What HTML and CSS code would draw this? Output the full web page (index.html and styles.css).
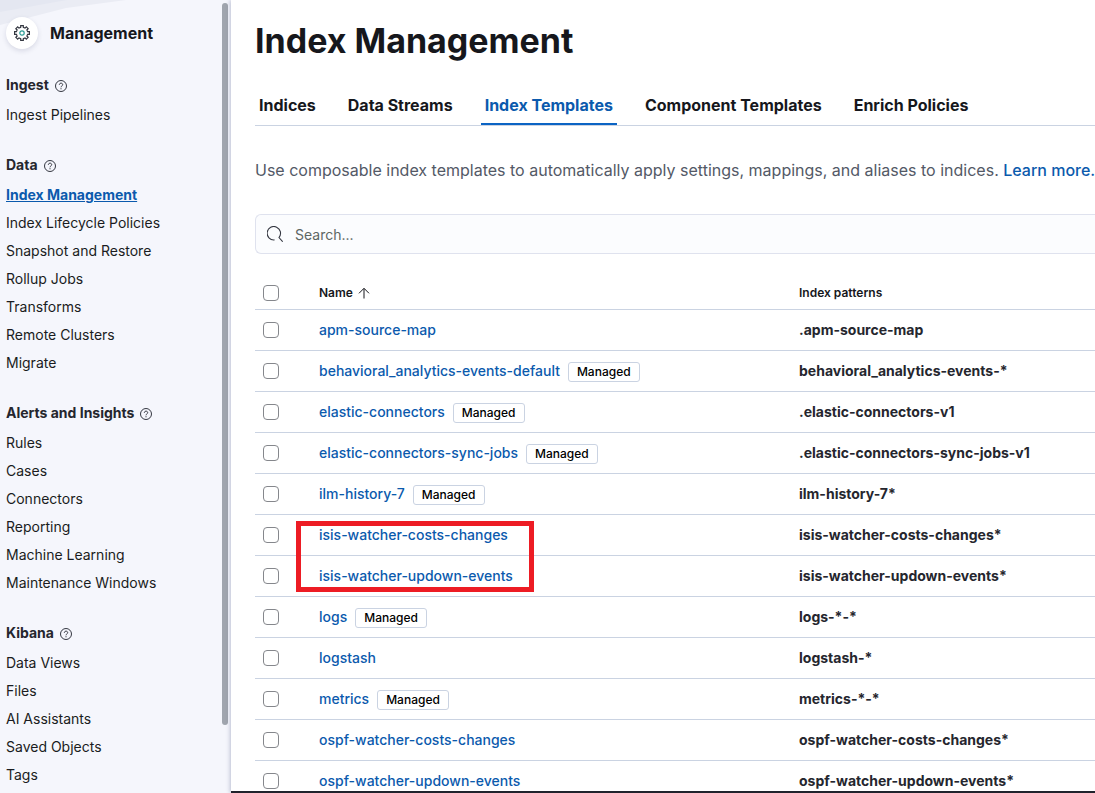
FILE: index.html
```html
<!DOCTYPE html>
<html lang="en">
<head>
<meta charset="utf-8">
<title>Index Management</title>
<link rel="stylesheet" href="styles.css">
</head>
<body>
<svg class="defs" aria-hidden="true">
  <symbol id="help" viewBox="0 0 12 12"><circle cx="6" cy="6" r="5.500" fill="none" stroke="currentColor" stroke-width="1"/><path d="M4.300 4.800c0-2.200 3.400-2.200 3.400-.1C7.700 5.900 6 5.900 6 7.300M6 8.200v1.100" fill="none" stroke="currentColor" stroke-width="1"/></symbol>
</svg>
<div class="app">
  <aside class="sidebar">
    <svg class="sidebar-art" viewBox="0 0 222 26" aria-hidden="true"><path d="M0 0H126L66 8 0 25z" fill="#eaecf4"/><path d="M0 0H67L0 12z" fill="#e4e7f1"/></svg>
    <header class="brand">
      <span class="avatar"><svg width="18" height="18" viewBox="0 0 18 18" fill="none" aria-hidden="true"><path d="M7.700 3.400V1.600h2.600v1.800l1.740.72 1.270-1.270 1.840 1.840-1.270 1.270.72 1.740h1.800v2.600h-1.800l-.72 1.740 1.270 1.270-1.840 1.840-1.270-1.270-1.740.72v1.800H7.700v-1.800l-1.740-.72-1.270 1.270-1.840-1.840 1.270-1.270-.72-1.740H1.600V7.700h1.800l.72-1.740-1.270-1.270 1.840-1.840 1.270 1.270z" stroke="#343741" stroke-width="1.200"/><circle cx="9" cy="9" r="2.200" stroke="#2d9c96" stroke-width="1.200"/></svg></span>
      <h2 class="brand-name">Management</h2>
    </header>
    <nav class="nav" aria-label="Management">
      <section class="group">
        <h3 class="group-title">Ingest <svg class="help"><use href="#help"/></svg></h3>
        <ul class="links"><li><a href="#">Ingest Pipelines</a></li></ul>
      </section>
      <section class="group">
        <h3 class="group-title">Data <svg class="help"><use href="#help"/></svg></h3>
        <ul class="links">
          <li><a href="#" class="current" aria-current="page">Index Management</a></li>
          <li><a href="#">Index Lifecycle Policies</a></li>
          <li><a href="#">Snapshot and Restore</a></li>
          <li><a href="#">Rollup Jobs</a></li>
          <li><a href="#">Transforms</a></li>
          <li><a href="#">Remote Clusters</a></li>
          <li><a href="#">Migrate</a></li>
        </ul>
      </section>
      <section class="group">
        <h3 class="group-title">Alerts and Insights <svg class="help"><use href="#help"/></svg></h3>
        <ul class="links">
          <li><a href="#">Rules</a></li>
          <li><a href="#">Cases</a></li>
          <li><a href="#">Connectors</a></li>
          <li><a href="#">Reporting</a></li>
          <li><a href="#">Machine Learning</a></li>
          <li><a href="#">Maintenance Windows</a></li>
        </ul>
      </section>
      <section class="group">
        <h3 class="group-title">Kibana <svg class="help"><use href="#help"/></svg></h3>
        <ul class="links">
          <li><a href="#">Data Views</a></li>
          <li><a href="#">Files</a></li>
          <li><a href="#">AI Assistants</a></li>
          <li><a href="#">Saved Objects</a></li>
          <li><a href="#">Tags</a></li>
        </ul>
      </section>
    </nav>
    <div class="scroll-thumb"></div>
  </aside>
  <main class="main">
    <h1 class="title">Index Management</h1>
    <nav class="tabs" aria-label="Sections">
      <a class="tab" href="#">Indices</a>
      <a class="tab" href="#">Data Streams</a>
      <a class="tab selected" href="#" aria-current="page">Index Templates</a>
      <a class="tab" href="#">Component Templates</a>
      <a class="tab" href="#">Enrich Policies</a>
    </nav>
    <p class="intro">Use composable index templates to automatically apply settings, mappings, and aliases to indices. <a href="#">Learn more.</a></p>
    <label class="search">
      <svg width="16" height="16" viewBox="0 0 16 16" fill="none" stroke="#343741" stroke-width="1.100" aria-hidden="true"><path d="M7.500 13.900A6.700 6.700 0 1 1 12 11.500l3.700 4.200"/></svg>
      <input type="search" placeholder="Search..." aria-label="Search">
    </label>
    <table class="table">
      <colgroup><col class="col-check"><col class="col-name"><col></colgroup>
      <thead>
        <tr><th><input type="checkbox" aria-label="Select all rows"></th><th><button class="sort" type="button">Name <svg width="12" height="12" viewBox="0 0 12 12" fill="none" stroke="currentColor" aria-hidden="true"><path d="M6 11.500V1.500M1 6.300l5-5 5 5"/></svg></button></th><th>Index patterns</th></tr>
      </thead>
      <tbody>
        <tr><td><input type="checkbox" aria-label="Select apm-source-map"></td><td><a href="#">apm-source-map</a></td><td>.apm-source-map</td></tr>
        <tr><td><input type="checkbox" aria-label="Select behavioral_analytics-events-default"></td><td><a href="#">behavioral_analytics-events-default</a><span class="badge">Managed</span></td><td>behavioral_analytics-events-*</td></tr>
        <tr><td><input type="checkbox" aria-label="Select elastic-connectors"></td><td><a href="#">elastic-connectors</a><span class="badge">Managed</span></td><td>.elastic-connectors-v1</td></tr>
        <tr><td><input type="checkbox" aria-label="Select elastic-connectors-sync-jobs"></td><td><a href="#">elastic-connectors-sync-jobs</a><span class="badge">Managed</span></td><td>.elastic-connectors-sync-jobs-v1</td></tr>
        <tr><td><input type="checkbox" aria-label="Select ilm-history-7"></td><td><a href="#">ilm-history-7</a><span class="badge">Managed</span></td><td>ilm-history-7*</td></tr>
        <tr><td><input type="checkbox" aria-label="Select isis-watcher-costs-changes"></td><td class="marked"><a href="#">isis-watcher-costs-changes</a><span class="marker"></span></td><td>isis-watcher-costs-changes*</td></tr>
        <tr><td><input type="checkbox" aria-label="Select isis-watcher-updown-events"></td><td><a href="#">isis-watcher-updown-events</a></td><td>isis-watcher-updown-events*</td></tr>
        <tr><td><input type="checkbox" aria-label="Select logs"></td><td><a href="#">logs</a><span class="badge">Managed</span></td><td>logs-*-*</td></tr>
        <tr><td><input type="checkbox" aria-label="Select logstash"></td><td><a href="#">logstash</a></td><td>logstash-*</td></tr>
        <tr><td><input type="checkbox" aria-label="Select metrics"></td><td><a href="#">metrics</a><span class="badge">Managed</span></td><td>metrics-*-*</td></tr>
        <tr><td><input type="checkbox" aria-label="Select ospf-watcher-costs-changes"></td><td><a href="#">ospf-watcher-costs-changes</a></td><td>ospf-watcher-costs-changes*</td></tr>
        <tr><td><input type="checkbox" aria-label="Select ospf-watcher-updown-events"></td><td><a href="#">ospf-watcher-updown-events</a></td><td>ospf-watcher-updown-events*</td></tr>
      </tbody>
    </table>
  </main>
</div>
</body>
</html>
```
FILE: styles.css
```css
* { box-sizing: border-box; }
body {
  margin: 0;
  font-family: Inter, "Liberation Sans", sans-serif;
  font-size: 14px;
  line-height: 20px;
  color: #16171c;
  background: #fff;
}
h1, h2, h3, p, ul { margin: 0; padding: 0; }
a { color: #0b5aad; text-decoration: none; }
.defs { position: absolute; width: 0; height: 0; }

.app { display: flex; height: 100vh; overflow: hidden; }

/* Sidebar */
.sidebar {
  position: relative;
  flex: 0 0 231px;
  padding: 17px 6px 0;
  background: #f5f6fc;
}
.sidebar-art { position: absolute; top: 0; left: 0; width: 222px; height: 26px; }
.brand { position: relative; display: flex; align-items: center; gap: 12px; }
.avatar {
  display: grid;
  place-items: center;
  width: 32px;
  height: 32px;
  border-radius: 50%;
  background: #fff;
  box-shadow: 0 2px 5px rgba(40, 50, 90, .14);
}
.brand-name { font-size: 16px; font-weight: 700; line-height: 24px; }
.nav { display: flex; flex-direction: column; gap: 26px; padding-top: 26px; }
.group { display: flex; flex-direction: column; gap: 6px; }
.group-title {
  display: flex;
  align-items: center;
  gap: 6px;
  font-size: 14px;
  font-weight: 700;
  color: #25262e;
}
.help { width: 12px; height: 12px; margin-top: 2px; color: #343741; }
.links { list-style: none; line-height: 28px; }
.links a { color: #1a1c21; }
.links .current { color: #0b5aad; font-weight: 700; text-decoration: underline; }
.scroll-thumb {
  position: absolute;
  top: 3px;
  right: 3px;
  width: 6px;
  height: 91vh;
  border-radius: 3px;
  background: #a0a5ae;
}

/* Content */
.main {
  position: relative;
  flex: 1;
  min-width: 0;
  padding: 21px 0 0 24px;
  background: #fff;
  border-bottom: 2px solid #20222c;
  box-shadow: -1px 0 4px rgba(60, 70, 120, .3);
  overflow: hidden;
}
.title { font-size: 34px; font-weight: 700; line-height: 40px; }
.tabs { display: flex; gap: 24px; margin-top: 24px; border-bottom: 1px solid #cad3e2; }
.tab {
  padding: 8px 4px 6px;
  border-bottom: 2px solid transparent;
  font-size: 16px;
  font-weight: 700;
  line-height: 24px;
  color: #16171c;
  white-space: nowrap;
}
.tab.selected { color: #0b5aad; border-bottom-color: #0b64c4; }
.intro {
  margin-top: 32px;
  font-size: 16px;
  line-height: 24px;
  color: #535966;
  white-space: nowrap;
}
.intro a { font-weight: 500; }
.search {
  display: flex;
  align-items: center;
  gap: 12px;
  height: 40px;
  margin-top: 32px;
  padding-left: 11px;
  border: 1px solid #dfe2ee;
  border-right: 0;
  border-radius: 6px 0 0 6px;
  background: #fbfcfe;
}
.search input {
  flex: 1;
  min-width: 0;
  padding: 2px 0 0;
  border: 0;
  outline: 0;
  background: transparent;
  font: inherit;
}
.search input::placeholder { color: #5d6664; opacity: 1; }

/* Table */
.table { width: 100%; margin-top: 23px; border-collapse: separate; border-spacing: 0; table-layout: fixed; }
.col-check { width: 56px; }
.col-name { width: 480px; }
.table th, .table td {
  padding: 0 8px;
  border-bottom: 1px solid #cad3e2;
  text-align: left;
  white-space: nowrap;
}
.table th { height: 33px; font-size: 12px; font-weight: 600; }
.table td { height: 41px; font-weight: 700; color: #25262e; }
.table td a { font-weight: 500; }
.table input {
  display: block;
  appearance: none;
  width: 16px;
  height: 16px;
  margin: 0;
  border: 1px solid #85878c;
  border-radius: 4px;
  background: #fff;
}
.sort {
  display: flex;
  align-items: center;
  gap: 5px;
  padding: 0;
  border: 0;
  background: none;
  font: inherit;
  color: inherit;
}
.badge {
  display: inline-block;
  margin-left: 8px;
  padding: 0 8px;
  border: 1px solid #cad3e2;
  border-radius: 3px;
  font-size: 12px;
  font-weight: 500;
  line-height: 18px;
  color: #000;
}
.marked { position: relative; }
.marker {
  position: absolute;
  top: 6px;
  left: -15px;
  z-index: 1;
  width: 238px;
  height: 71px;
  border: 5px solid #ed1c24;
  pointer-events: none;
}
```
